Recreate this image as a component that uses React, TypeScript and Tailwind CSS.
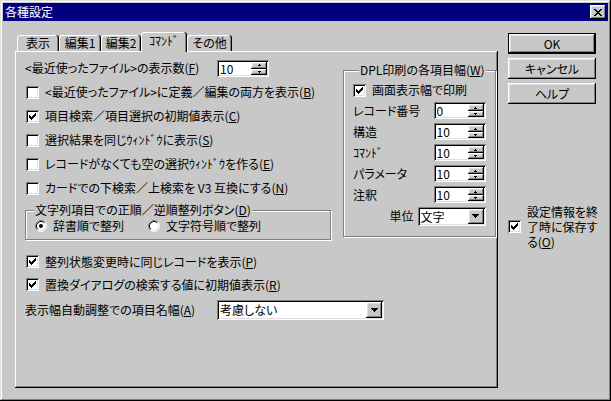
import React from "react";

const RAISED =
  "shadow-[inset_-1px_-1px_0_#000,inset_1px_1px_0_#fff,inset_-2px_-2px_0_#808080,inset_2px_2px_0_#dfdfdf]";
const SUNKEN =
  "shadow-[inset_1px_1px_0_#808080,inset_-1px_-1px_0_#fff,inset_2px_2px_0_#000,inset_-2px_-2px_0_#dfdfdf]";
const ETCHED = "border border-[#808080] shadow-[inset_1px_1px_0_#fff,1px_1px_0_#fff]";

function U({ c }: { c: string }) {
  return <span className="underline underline-offset-[1px]">{c}</span>;
}

function CheckMark() {
  return (
    <svg width="7" height="7" viewBox="0 0 7 7" shapeRendering="crispEdges">
      <path
        fill="#000"
        d="M6 0h1v1h-1z M5 1h2v1h-2z M0 2h1v1h-1z M4 2h3v1h-3z M0 3h2v1h-2z M3 3h3v1h-3z M0 4h5v1h-5z M1 5h3v1h-3z M2 6h1v1h-1z"
      />
    </svg>
  );
}

function Checkbox({ checked }: { checked?: boolean }) {
  return (
    <div className={`w-[13px] h-[13px] shrink-0 bg-white flex items-center justify-center ${SUNKEN}`}>
      {checked && <CheckMark />}
    </div>
  );
}

function Radio({ checked }: { checked?: boolean }) {
  return (
    <svg width="12" height="12" viewBox="0 0 12 12" className="shrink-0">
      <circle cx="6" cy="6" r="5" fill="#fff" />
      <path d="M2.11 9.89 A5.5 5.5 0 0 1 9.89 2.11" stroke="#808080" fill="none" />
      <path d="M9.89 2.11 A5.5 5.5 0 0 1 2.11 9.89" stroke="#fff" fill="none" />
      <path d="M2.82 9.18 A4.5 4.5 0 0 1 9.18 2.82" stroke="#000" fill="none" />
      <path d="M9.18 2.82 A4.5 4.5 0 0 1 2.82 9.18" stroke="#dfdfdf" fill="none" />
      {checked && <circle cx="6" cy="6" r="2" fill="#000" />}
    </svg>
  );
}

function DownArrow() {
  return (
    <svg width="7" height="4" viewBox="0 0 7 4" shapeRendering="crispEdges">
      <path fill="#000" d="M0 0h7v1h-7z M1 1h5v1h-5z M2 2h3v1h-3z M3 3h1v1h-1z" />
    </svg>
  );
}

function TinyUp() {
  return (
    <svg width="3" height="2" viewBox="0 0 3 2" shapeRendering="crispEdges">
      <path fill="#000" d="M1 0h1v1h-1z M0 1h3v1h-3z" />
    </svg>
  );
}

function TinyDown() {
  return (
    <svg width="3" height="2" viewBox="0 0 3 2" shapeRendering="crispEdges">
      <path fill="#000" d="M0 0h3v1h-3z M1 1h1v1h-1z" />
    </svg>
  );
}

function Spin({ value }: { value: string }) {
  return (
    <div className={`w-[52px] h-[17px] shrink-0 bg-white flex p-[2px] ${SUNKEN}`}>
      <span className="flex-1 pl-[1px] leading-[13px]">{value}</span>
      <div className="w-[16px] flex flex-col">
        <div className={`h-[7px] bg-[#c8c8c8] flex items-center justify-center ${RAISED}`}>
          <TinyUp />
        </div>
        <div className={`h-[6px] bg-[#c8c8c8] flex items-center justify-center ${RAISED}`}>
          <TinyDown />
        </div>
      </div>
    </div>
  );
}

function Btn({ children, def }: { children: React.ReactNode; def?: boolean }) {
  if (def) {
    return (
      <div className="h-[21px] border border-black">
        <div className={`h-full flex items-center justify-center ${RAISED}`}>{children}</div>
      </div>
    );
  }
  return <div className={`h-[21px] flex items-center justify-center ${RAISED}`}>{children}</div>;
}

function CheckRow({ checked, children }: { checked?: boolean; children: React.ReactNode }) {
  return (
    <div className="flex items-center gap-[6px] pl-[1px] whitespace-nowrap">
      <Checkbox checked={checked} />
      <span>{children}</span>
    </div>
  );
}

function Tab({ label, w, selected }: { label: string; w: string; selected?: boolean }) {
  if (selected) {
    return (
      <div
        className={`${w} h-[20px] -mb-px relative z-10 bg-[#c8c8c8] rounded-t-[3px] flex justify-center pt-[2px] shadow-[inset_-1px_0_0_#000,inset_1px_1px_0_#fff,inset_-2px_0_0_#808080]`}
      >
        {label}
      </div>
    );
  }
  return (
    <div
      className={`${w} h-[16px] rounded-t-[3px] flex items-center justify-center shadow-[inset_-1px_0_0_#000,inset_1px_1px_0_#fff,inset_-2px_0_0_#808080]`}
    >
      {label}
    </div>
  );
}

function FieldRow({ label, value }: { label: string; value: string }) {
  return (
    <div className="h-[21px] flex items-center justify-between">
      <span>{label}</span>
      <Spin value={value} />
    </div>
  );
}

export default function App() {
  return (
    <div className="w-[611px] h-[401px] bg-[#c8c8c8] p-[3px] flex flex-col text-[12px] leading-[14px] text-black [font-family:'Noto_Sans_CJK_JP',sans-serif] [font-feature-settings:'palt'] shadow-[inset_-1px_-1px_0_#000,inset_1px_1px_0_#dfdfdf,inset_-2px_-2px_0_#808080,inset_2px_2px_0_#fff]">
      {/* Caption */}
      <div className="h-[18px] shrink-0 bg-[#000080] flex items-center justify-between pl-[2px] pr-[2px]">
        <span className="text-white">各種設定</span>
        <div className={`w-[16px] h-[14px] bg-[#c8c8c8] flex items-center justify-center ${RAISED}`}>
          <svg width="8" height="7" viewBox="0 0 8 7" shapeRendering="crispEdges">
            <path
              fill="#000"
              d="M0 0h2v1h-2z M6 0h2v1h-2z M1 1h2v1h-2z M5 1h2v1h-2z M2 2h4v1h-4z M3 3h2v1h-2z M2 4h4v1h-4z M1 5h2v1h-2z M5 5h2v1h-2z M0 6h2v1h-2z M6 6h2v1h-2z"
            />
          </svg>
        </div>
      </div>

      {/* Body */}
      <div className="flex flex-1 pl-[12px] pt-[11px]">
        {/* Tab control */}
        <div className="w-[483px] flex flex-col">
          <div className="h-[19px] flex items-end pl-[2px]">
            <Tab label="表示" w="w-[42px]" />
            <Tab label="編集1" w="w-[42px]" />
            <Tab label="編集2" w="w-[40px]" />
            <Tab label="ｺﾏﾝﾄﾞ" w="w-[46px]" selected />
            <Tab label="その他" w="w-[45px]" />
          </div>
          <div className="h-[337px] pl-[10px] pt-[5px] flex flex-col shadow-[inset_-1px_-1px_0_#000,inset_1px_1px_0_#fff,inset_-2px_-2px_0_#808080]">
            <div className="flex">
              {/* Left column */}
              <div className="w-[306px] flex flex-col">
                <div className="h-[24px] flex items-center">
                  <span className="w-[192px] whitespace-nowrap">
                    &lt;最近使ったファイル&gt;の表示数(<U c="F" />)
                  </span>
                  <Spin value="10" />
                </div>
                <div className="h-[24px] flex items-center">
                  <CheckRow>
                    &lt;最近使ったファイル&gt;に定義／編集の両方を表示(<U c="B" />)
                  </CheckRow>
                </div>
                <div className="h-[24px] flex items-center">
                  <CheckRow checked>
                    項目検索／項目選択の初期値表示(<U c="C" />)
                  </CheckRow>
                </div>
                <div className="h-[24px] flex items-center">
                  <CheckRow>
                    選択結果を同じｳｨﾝﾄﾞｳに表示(<U c="S" />)
                  </CheckRow>
                </div>
                <div className="h-[24px] flex items-center">
                  <CheckRow>
                    レコードがなくても空の選択ｳｨﾝﾄﾞｳを作る(<U c="E" />)
                  </CheckRow>
                </div>
                <div className="h-[24px] flex items-center">
                  <CheckRow>
                    カードでの下検索／上検索を V3 互換にする(<U c="N" />)
                  </CheckRow>
                </div>
                <fieldset className={`mt-[3px] h-[37px] ${ETCHED}`}>
                  <legend className="ml-[8px] px-[1px] bg-[#c8c8c8] whitespace-nowrap">
                    文字列項目での正順／逆順整列ボタン(<U c="D" />)
                  </legend>
                  <div className="h-[17px] flex items-center pl-[9px]">
                    <div className="w-[113px] flex items-center gap-[6px]">
                      <Radio checked />
                      <span>辞書順で整列</span>
                    </div>
                    <div className="flex items-center gap-[6px]">
                      <Radio />
                      <span>文字符号順で整列</span>
                    </div>
                  </div>
                </fieldset>
              </div>

              {/* DPL group */}
              <fieldset className={`ml-[12px] mt-[7px] w-[144px] h-[174px] pl-[9px] pr-[9px] ${ETCHED}`}>
                <legend className="ml-[6px] px-[1px] bg-[#c8c8c8] whitespace-nowrap">
                  DPL印刷の各項目幅(<U c="W" />)
                </legend>
                <div className="pt-[3px] flex flex-col">
                  <div className="h-[20px] flex items-center gap-[6px]">
                    <Checkbox checked />
                    <span>画面表示幅で印刷</span>
                  </div>
                  <FieldRow label="レコード番号" value="0" />
                  <FieldRow label="構造" value="10" />
                  <FieldRow label="ｺﾏﾝﾄﾞ" value="10" />
                  <FieldRow label="パラメータ" value="10" />
                  <FieldRow label="注釈" value="10" />
                  <div className="h-[22px] flex items-center justify-end gap-[4px]">
                    <span>単位</span>
                    <div className={`w-[68px] h-[19px] bg-white flex p-[2px] ${SUNKEN}`}>
                      <span className="flex-1 pl-[1px] leading-[15px]">文字</span>
                      <div className={`w-[16px] bg-[#c8c8c8] flex items-center justify-center ${RAISED}`}>
                        <DownArrow />
                      </div>
                    </div>
                  </div>
                </div>
              </fieldset>
            </div>

            <div className="mt-[10px] h-[23px] flex items-center">
              <CheckRow checked>
                整列状態変更時に同じレコードを表示(<U c="P" />)
              </CheckRow>
            </div>
            <div className="h-[23px] flex items-center">
              <CheckRow checked>
                置換ダイアログの検索する値に初期値表示(<U c="R" />)
              </CheckRow>
            </div>
            <div className="mt-[4px] h-[20px] flex items-center">
              <span className="w-[192px] whitespace-nowrap">
                表示幅自動調整での項目名幅(<U c="A" />)
              </span>
              <div className={`w-[167px] h-[20px] bg-white flex p-[2px] ${SUNKEN}`}>
                <span className="flex-1 pl-[1px] leading-[16px]">考慮しない</span>
                <div className={`w-[16px] bg-[#c8c8c8] flex items-center justify-center ${RAISED}`}>
                  <DownArrow />
                </div>
              </div>
            </div>
          </div>
        </div>

        {/* Right column */}
        <div className="ml-[10px] mt-[1px] w-[88px] flex flex-col">
          <Btn def>OK</Btn>
          <div className="mt-[4px]">
            <Btn>キャンセル</Btn>
          </div>
          <div className="mt-[4px]">
            <Btn>ヘルプ</Btn>
          </div>
          <div className="mt-[100px] flex items-center gap-[6px]">
            <Checkbox checked />
            <span className="leading-[15px] whitespace-nowrap">
              設定情報を終
              <br />
              了時に保存す
              <br />
              る(<U c="O" />)
            </span>
          </div>
        </div>
      </div>
    </div>
  );
}
